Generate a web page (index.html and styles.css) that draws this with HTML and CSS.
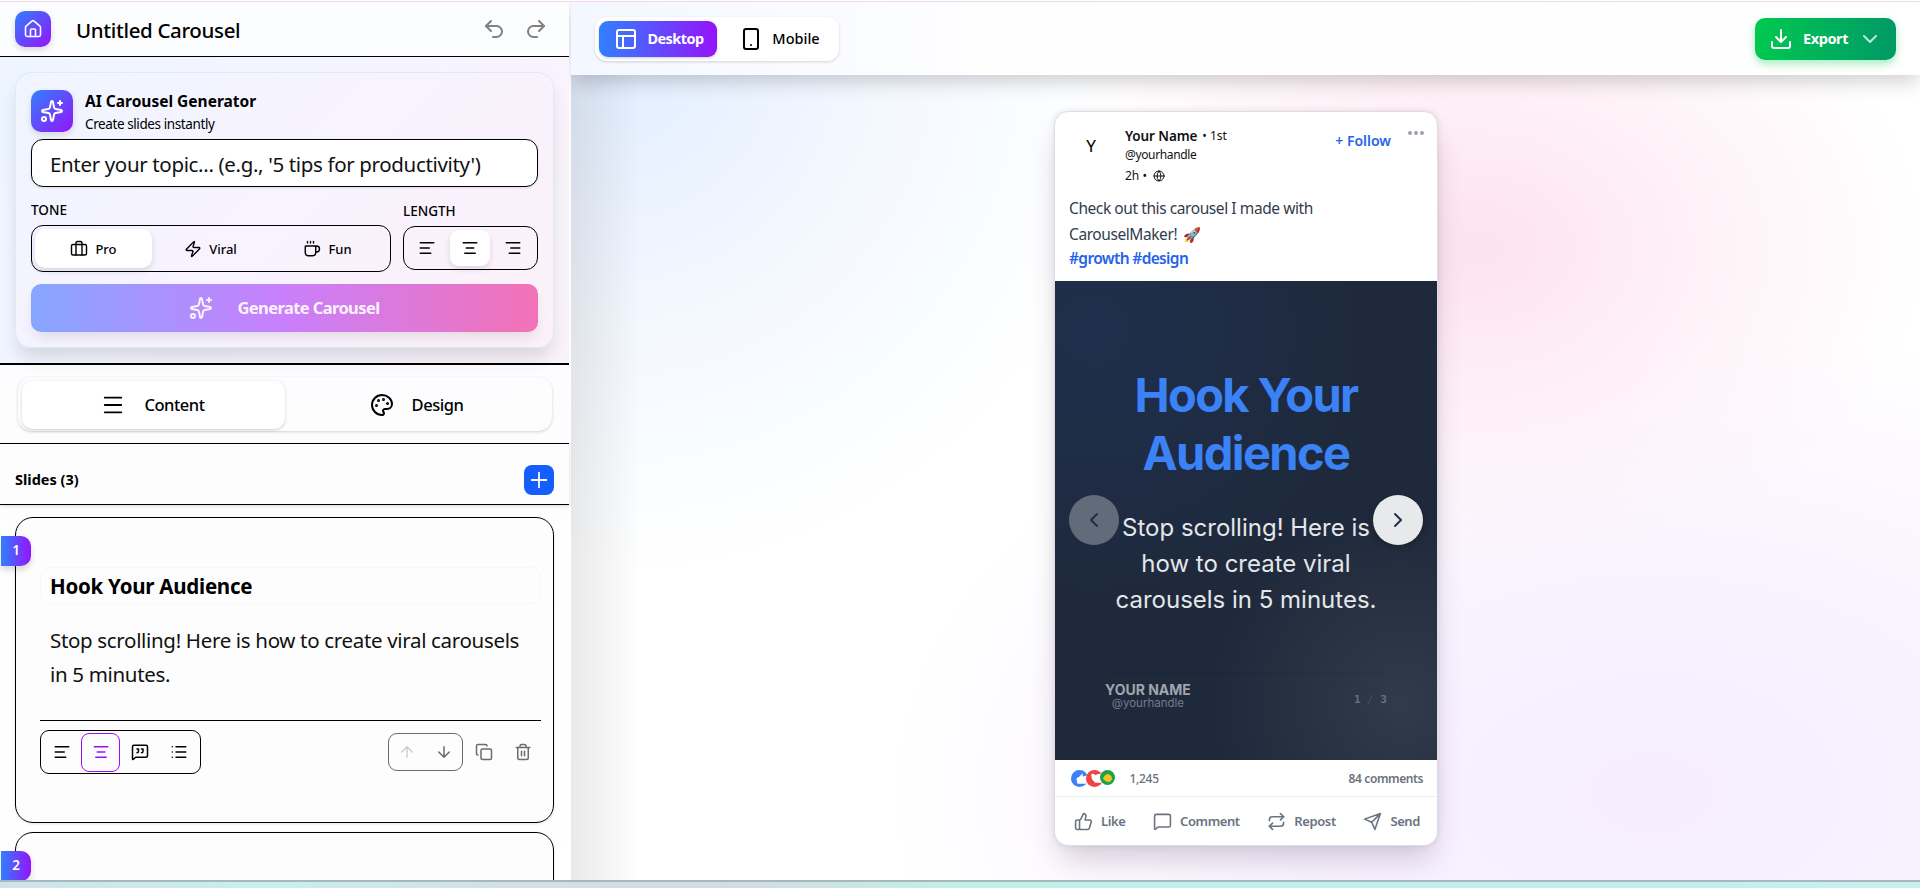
FILE: index.html
```
<!DOCTYPE html>
<html lang="en">
<head>
  <meta charset="UTF-8">
  <meta name="viewport" content="width=device-width, initial-scale=1.0">
  <title>Carousel Maker</title>
  <link rel="stylesheet" href="styles.css">
</head>
<body>
  <svg width="0" height="0" class="sprite">
    <symbol id="sparkles" viewBox="0 0 24 24">
      <path d="M11.017 2.814a1 1 0 0 1 1.966 0l1.051 5.558a2 2 0 0 0 1.594 1.594l5.558 1.051a1 1 0 0 1 0 1.966l-5.558 1.051a2 2 0 0 0-1.594 1.594l-1.051 5.558a1 1 0 0 1-1.966 0l-1.051-5.558a2 2 0 0 0-1.594-1.594l-5.558-1.051a1 1 0 0 1 0-1.966l5.558-1.051a2 2 0 0 0 1.594-1.594z"/>
      <path d="M20 2v4M22 4h-4"/><circle cx="4" cy="20" r="2"/>
    </symbol>
    <symbol id="align-left" viewBox="0 0 24 24"><path d="M3 5h18M3 12h12M3 19h14"/></symbol>
    <symbol id="align-center" viewBox="0 0 24 24"><path d="M3 5h18M7 12h10M5 19h14"/></symbol>
    <symbol id="align-right" viewBox="0 0 24 24"><path d="M3 5h18M9 12h12M7 19h14"/></symbol>
  </svg>

  <div class="app">
    <aside class="sidebar">
      <header class="side-header">
        <button class="home">
          <svg class="icon" viewBox="0 0 24 24"><path d="M15 21v-8a1 1 0 0 0-1-1h-4a1 1 0 0 0-1 1v8"/><path d="M3 10a2 2 0 0 1 .709-1.528l7-6a2 2 0 0 1 2.582 0l7 6A2 2 0 0 1 21 10v9a2 2 0 0 1-2 2H5a2 2 0 0 1-2-2z"/></svg>
        </button>
        <h1 class="project-name">Untitled Carousel</h1>
        <div class="history">
          <svg class="icon" viewBox="0 0 24 24"><path d="M9 14 4 9l5-5"/><path d="M4 9h10.500a5.500 5.500 0 0 1 0 11H11"/></svg>
          <svg class="icon" viewBox="0 0 24 24"><path d="m15 14 5-5-5-5"/><path d="M20 9H9.500a5.500 5.500 0 0 0 0 11H13"/></svg>
        </div>
      </header>

      <section class="generator">
        <div class="gen-card">
          <div class="gen-head">
            <div class="gen-icon"><svg class="icon"><use href="#sparkles"/></svg></div>
            <div>
              <h2 class="gen-title">AI Carousel Generator</h2>
              <p class="gen-sub">Create slides instantly</p>
            </div>
          </div>
          <div class="topic"><span>Enter your topic... (e.g., '5 tips for productivity')</span></div>
          <div class="options">
            <div class="tone">
              <span class="opt-label">TONE</span>
              <div class="tone-box">
                <button class="tone-btn active"><svg class="icon" viewBox="0 0 24 24"><path d="M16 20V4a2 2 0 0 0-2-2h-4a2 2 0 0 0-2 2v16"/><rect x="2" y="6" width="20" height="14" rx="2"/></svg><span>Pro</span></button>
                <button class="tone-btn"><svg class="icon" viewBox="0 0 24 24"><path d="M4 14a1 1 0 0 1-.780-1.630l9.900-10.200a.5.5 0 0 1 .860.460l-1.920 6.020A1 1 0 0 0 13 10h7a1 1 0 0 1 .780 1.630l-9.900 10.200a.5.5 0 0 1-.860-.460l1.920-6.020A1 1 0 0 0 11 14z"/></svg><span>Viral</span></button>
                <button class="tone-btn"><svg class="icon" viewBox="0 0 24 24"><path d="M10 2v2M14 2v2M6 2v2M16 8a1 1 0 0 1 1 1v8a4 4 0 0 1-4 4H7a4 4 0 0 1-4-4V9a1 1 0 0 1 1-1h14a4 4 0 1 1 0 8h-1"/></svg><span>Fun</span></button>
              </div>
            </div>
            <div class="length">
              <span class="opt-label">LENGTH</span>
              <div class="length-box">
                <button><svg class="icon"><use href="#align-left"/></svg></button>
                <button class="active"><svg class="icon"><use href="#align-center"/></svg></button>
                <button><svg class="icon"><use href="#align-right"/></svg></button>
              </div>
            </div>
          </div>
          <button class="generate"><svg class="icon"><use href="#sparkles"/></svg><span>Generate Carousel</span></button>
        </div>
      </section>

      <nav class="tabs-wrap">
        <div class="tabs">
          <button class="tab active"><svg class="icon" viewBox="0 0 24 24"><path d="M3 4h18M3 12h18M3 20h18"/></svg><span>Content</span></button>
          <button class="tab design"><svg class="icon" viewBox="0 0 24 24"><path d="M12 22a1 1 0 0 1 0-20 10 9 0 0 1 10 9 5 5 0 0 1-5 5h-2.250a1.750 1.750 0 0 0-1.400 2.800l.3.400a1.750 1.750 0 0 1-1.400 2.800z"/><g fill="currentColor"><circle cx="13.500" cy="6.500" r=".5"/><circle cx="17.500" cy="10.500" r=".5"/><circle cx="6.500" cy="12.500" r=".5"/><circle cx="8.500" cy="7.500" r=".5"/></g></svg><span>Design</span></button>
        </div>
      </nav>

      <div class="slides-head">
        <h3>Slides (3)</h3>
        <button class="add"><svg class="icon" viewBox="0 0 24 24"><path d="M4 12h16M12 4v16"/></svg></button>
      </div>

      <div class="slides">
        <article class="slide">
          <span class="num">1</span>
          <div class="slide-title">Hook Your Audience</div>
          <p class="slide-body"><span>Stop scrolling! Here is how to create viral carousels</span><br><span>in 5 minutes.</span></p>
          <div class="slide-tools">
            <div class="layouts">
              <button><svg class="icon"><use href="#align-left"/></svg></button>
              <button class="active"><svg class="icon"><use href="#align-center"/></svg></button>
              <button><svg class="icon" viewBox="0 0 24 24"><path d="M22 17a2 2 0 0 1-2 2H6.828a2 2 0 0 0-1.414.586l-2.202 2.202A.710.710 0 0 1 2 21.286V5a2 2 0 0 1 2-2h16a2 2 0 0 1 2 2z"/><path d="M14 13a2 2 0 0 0 2-2V8h-2M8 13a2 2 0 0 0 2-2V8H8"/></svg></button>
              <button><svg class="icon" viewBox="0 0 24 24"><path d="M8 5h13M8 12h13M8 19h13M3 5h.01M3 12h.01M3 19h.01"/></svg></button>
            </div>
            <div class="actions">
              <div class="move">
                <svg class="icon off" viewBox="0 0 24 24"><path d="m5 12 7-7 7 7M12 19V5"/></svg>
                <svg class="icon" viewBox="0 0 24 24"><path d="m19 12-7 7-7-7M12 5v14"/></svg>
              </div>
              <svg class="icon" viewBox="0 0 24 24"><rect x="8" y="8" width="14" height="14" rx="2"/><path d="M4 16c-1.100 0-2-.9-2-2V4c0-1.100.9-2 2-2h10c1.100 0 2 .9 2 2"/></svg>
              <svg class="icon" viewBox="0 0 24 24"><path d="M10 11v6M14 11v6M19 6v14a2 2 0 0 1-2 2H7a2 2 0 0 1-2-2V6M3 6h18M8 6V4a2 2 0 0 1 2-2h4a2 2 0 0 1 2 2v2"/></svg>
            </div>
          </div>
        </article>
        <article class="slide">
          <span class="num">2</span>
        </article>
      </div>
    </aside>

    <main class="stage">
      <header class="topbar">
        <div class="devices">
          <button class="device active"><svg class="icon" viewBox="0 0 24 24"><rect x="3" y="3" width="18" height="18" rx="2"/><path d="M3 9h18M9 21V9"/></svg><span>Desktop</span></button>
          <button class="device mobile"><svg class="icon" viewBox="0 0 24 24"><rect x="5" y="2" width="14" height="20" rx="2"/><path d="M12 18h.01"/></svg><span>Mobile</span></button>
        </div>
        <button class="export">
          <svg class="icon" viewBox="0 0 24 24"><path d="M21 15v4a2 2 0 0 1-2 2H5a2 2 0 0 1-2-2v-4M7 10l5 5 5-5M12 15V3"/></svg>
          <span>Export</span>
          <svg class="icon chevron" viewBox="0 0 24 24"><path d="m6 9 6 6 6-6"/></svg>
        </button>
      </header>

      <div class="canvas">
        <div class="post">
          <div class="post-head">
            <div class="avatar">Y</div>
            <div class="who">
              <div class="name"><b>Your Name</b><span>• 1st</span></div>
              <div class="handle">@yourhandle</div>
              <div class="time"><span>2h •</span><svg class="icon" viewBox="0 0 24 24"><circle cx="12" cy="12" r="10"/><path d="M12 2a14.500 14.500 0 0 0 0 20 14.500 14.500 0 0 0 0-20M2 12h20"/></svg></div>
            </div>
            <span class="follow">+ Follow</span>
            <span class="dots"><i></i><i></i><i></i></span>
          </div>
          <div class="caption">
            <p><span>Check out this carousel I made with</span><br><span>CarouselMaker! <em class="rocket">🚀</em></span></p>
            <p class="tags">#growth #design</p>
          </div>
          <div class="preview">
            <h2>Hook Your<br>Audience</h2>
            <p class="preview-body">Stop scrolling! Here is<br>how to create viral<br>carousels in 5 minutes.</p>
            <footer class="preview-foot">
              <div class="sign"><b>YOUR NAME</b><span>@yourhandle</span></div>
              <div class="page">1 <i>/</i> 3</div>
            </footer>
            <button class="nav prev"><svg class="icon" viewBox="0 0 24 24"><path d="m15 18-6-6 6-6"/></svg></button>
            <button class="nav next"><svg class="icon" viewBox="0 0 24 24"><path d="m9 18 6-6-6-6"/></svg></button>
          </div>
          <div class="stats">
            <div class="reactions">
              <span class="react like"><svg viewBox="0 0 16 16"><path d="M5 8 8 6l3-3v3l5-1v8H6z"/></svg></span>
              <span class="react love"><svg viewBox="0 0 16 16"><path d="M5 4c2-1 3 0 4 1 1-1 4-2 7-1v8H9C6 10 5 8 5 4z"/></svg></span>
              <span class="react clap"><svg viewBox="0 0 16 16"><path d="M5 6 8 4l4 2 1 4-3 3-4-1-3-3z"/></svg></span>
            </div>
            <span class="count">1,245</span>
            <span class="comments">84 comments</span>
          </div>
          <div class="post-actions">
            <div class="act"><svg class="icon" viewBox="0 0 24 24"><path d="M7 10v12M15 5.880 14 10h5.830a2 2 0 0 1 1.920 2.560l-2.330 8A2 2 0 0 1 17.500 22H4a2 2 0 0 1-2-2v-8a2 2 0 0 1 2-2h2.760a2 2 0 0 0 1.790-1.110L12 2a3.130 3.130 0 0 1 3 3.880z"/></svg><span>Like</span></div>
            <div class="act"><svg class="icon" viewBox="0 0 24 24"><path d="M22 17a2 2 0 0 1-2 2H6.828a2 2 0 0 0-1.414.586l-2.202 2.202A.710.710 0 0 1 2 21.286V5a2 2 0 0 1 2-2h16a2 2 0 0 1 2 2z"/></svg><span>Comment</span></div>
            <div class="act"><svg class="icon" viewBox="0 0 24 24"><path d="m17 2 4 4-4 4"/><path d="M3 11v-1a4 4 0 0 1 4-4h14M7 22l-4-4 4-4"/><path d="M21 13v1a4 4 0 0 1-4 4H3"/></svg><span>Repost</span></div>
            <div class="act"><svg class="icon" viewBox="0 0 24 24"><path d="M22 2 15 22l-4-9-9-4zM22 2 11 13"/></svg><span>Send</span></div>
          </div>
        </div>
      </div>
    </main>
  </div>
  <div class="desk-edge"></div>
</body>
</html>
```

FILE: styles.css
```
* {
  box-sizing: border-box;
  margin: 0;
  padding: 0;
}
body {
  height: 888px;
  overflow: hidden;
  display: flex;
  flex-direction: column;
  font-family: "Noto Sans", "Open Sans", sans-serif;
  color: #000;
  background: #fff;
  border-top: 1px solid #fff;
}
.app {
  display: flex;
  height: 879px;
  border-top: 1px solid #f0dcec;
}
.desk-edge {
  height: 8px;
  border-top: 2px solid #a5b8bc;
  background: linear-gradient(90deg, #cfe3ea 0, #c9efec 14%, #d4dfe8 27%, #d4dbe4 38%, #c3f0e4 50%, #c2efee 60%, #c6efee 100%);
}
.sprite {
  position: absolute;
}
button {
  font: inherit;
  color: inherit;
  border: none;
  background: none;
  display: flex;
  align-items: center;
  justify-content: center;
}
span {
  white-space: nowrap;
}
.icon {
  width: 18px;
  height: 18px;
  flex: none;
  fill: none;
  stroke: currentColor;
  stroke-width: 2;
  stroke-linecap: round;
  stroke-linejoin: round;
}

/* sidebar */
.sidebar {
  width: 569px;
  flex: none;
  display: flex;
  flex-direction: column;
  background: linear-gradient(180deg, #fbfbfe, #fff);
  position: relative;
}
.side-header {
  height: 55px;
  flex: none;
  display: flex;
  align-items: center;
  padding: 0 21px 0 15px;
  border-bottom: 1px solid #000;
  box-shadow: 0 1px 3px rgba(100, 50, 100, 0.2);
  background: #fcfdfe;
}
.home {
  width: 36px;
  height: 36px;
  border-radius: 10px;
  color: #fff;
  background: linear-gradient(135deg, #3080ff, #9514fa);
  box-shadow: 0 3px 6px rgba(0, 0, 0, 0.15);
}
.home .icon {
  width: 20px;
  height: 20px;
  stroke-width: 1.9;
}
.project-name {
  margin-left: 25px;
  font-size: 20.5px;
  font-weight: 500;
  letter-spacing: -0.35px;
  padding-top: 2px;
}
.history {
  margin-left: auto;
  display: flex;
  gap: 18px;
  color: #808080;
}
.history .icon {
  width: 24px;
  height: 24px;
}
.generator {
  height: 308px;
  flex: none;
  padding: 15px 15px 0;
  border-bottom: 2px solid #000;
  background: linear-gradient(120deg, #eef5ff, #f6f4fe 60%, #fbf3fa);
}
.gen-card {
  height: 276px;
  width: 539px;
  border: 1px solid #dbeafe;
  border-radius: 16px;
  padding: 17px 15px;
  background: linear-gradient(135deg, #eff5ff, #f8f3ff 50%, #fcf1f8);
  box-shadow: 0 12px 18px -3px rgba(0, 0, 0, 0.13);
}
.gen-head {
  display: flex;
  gap: 12px;
  height: 42px;
}
.gen-icon {
  width: 42px;
  height: 42px;
  border-radius: 10px;
  display: flex;
  align-items: center;
  justify-content: center;
  color: #fff;
  background: linear-gradient(135deg, #3080ff, #9514fa);
  box-shadow: 0 3px 6px rgba(0, 0, 0, 0.12);
}
.gen-icon .icon, .generate .icon {
  width: 24px;
  height: 24px;
}
.gen-title {
  font-size: 15.5px;
  line-height: 23px;
}
.gen-sub {
  font-size: 13.5px;
  line-height: 23px;
  letter-spacing: -0.4px;
}
.topic {
  margin-top: 7px;
  height: 48px;
  border: 1px solid #000;
  border-radius: 12px;
  padding: 1px 18px 0;
  display: flex;
  align-items: center;
  font-size: 20.5px;
  letter-spacing: -0.35px;
  color: #111;
  background: #fff;
  box-shadow: 0 1px 3px rgba(0, 0, 0, 0.1);
}
.options {
  display: flex;
  gap: 12px;
  margin-top: 14px;
}
.opt-label {
  display: block;
  height: 20px;
  line-height: 19px;
  font-size: 13.5px;
  font-weight: 500;
}
.tone-box {
  width: 360px;
  height: 47px;
  margin-top: 4px;
  border: 1px solid #000;
  border-radius: 12px;
  padding: 3px;
  display: flex;
}
.tone-btn {
  width: 117px;
  height: 39px;
  gap: 7px;
  border-radius: 10px;
  font-size: 13px;
  font-weight: 500;
}
.tone-btn .icon {
  stroke-width: 1.9;
}
.tone-btn.active, .length-box .active {
  background: #fff;
  box-shadow: 0 3px 6px rgba(0, 0, 0, 0.12);
}
.length .opt-label {
  padding-top: 1px;
}
.length-box {
  width: 135px;
  height: 44px;
  margin-top: 5px;
  border: 1px solid #000;
  border-radius: 12px;
  padding: 3px;
  display: flex;
  gap: 3px;
}
.length-box button {
  width: 40px;
  height: 36px;
  border-radius: 9px;
}
.generate {
  width: 507px;
  height: 48px;
  margin-top: 12px;
  border-radius: 10px;
  gap: 24px;
  color: #faf3ff;
  font-size: 16.5px;
  font-weight: 700;
  letter-spacing: -0.6px;
  background: linear-gradient(90deg, #87a6ff, #c97ffb 50%, #f272b6);
  box-shadow: 0 8px 14px -3px rgba(0, 0, 0, 0.1);
}
.generate span {
  margin-top: -2px;
}
.tabs-wrap {
  height: 79px;
  flex: none;
  padding: 12px 17px 0 18px;
  border-bottom: 1px solid #000;
}
.tabs {
  height: 54px;
  display: flex;
  padding: 4px;
  border-radius: 14px;
  box-shadow: 0 1px 3px rgba(0, 0, 0, 0.18);
}
.tab {
  flex: 1;
  height: 48px;
  gap: 20px;
  border-radius: 11px;
  font-size: 16.5px;
  font-weight: 500;
  letter-spacing: -0.45px;
}
.tab span {
  margin-top: -2px;
}
.tab.active {
  background: #fff;
  box-shadow: 0 1px 3px rgba(0, 0, 0, 0.2);
}
.tab .icon {
  width: 22px;
  height: 22px;
}
.tab.design {
  gap: 18px;
}
.tab.design .icon {
  width: 24px;
  height: 24px;
}
.slides-head {
  height: 61px;
  flex: none;
  display: flex;
  align-items: center;
  justify-content: space-between;
  padding: 12px 15px 0;
  border-bottom: 1px solid #000;
  box-shadow: 0 1px 4px rgba(0, 0, 0, 0.15);
}
.slides-head h3 {
  font-size: 14.5px;
  margin-top: -2px;
}
.add {
  width: 30px;
  height: 30px;
  border-radius: 8px;
  background: #155dfc;
  color: #fff;
}
.add .icon {
  width: 22px;
  height: 22px;
}
.slides {
  flex: 1;
  overflow: hidden;
  padding: 12px 15px 0;
  display: flex;
  flex-direction: column;
  gap: 9px;
}
.slide {
  position: relative;
  flex: none;
  width: 539px;
  height: 306px;
  border: 1px solid #000;
  border-radius: 18px;
  padding: 49px 12px 0 24px;
  background: #fdfdfe;
  box-shadow: 0 1px 3px rgba(0, 0, 0, 0.1);
}
.num {
  position: absolute;
  left: -15px;
  top: 18px;
  width: 30px;
  height: 30px;
  line-height: 28px;
  text-align: center;
  font-size: 13.5px;
  font-weight: 600;
  color: #fff;
  border-radius: 0 10px 10px 0;
  background: linear-gradient(90deg, #3080ff, #9514fa);
  box-shadow: 0 4px 6px rgba(0, 0, 0, 0.15);
}
.slide-title {
  height: 37px;
  line-height: 37px;
  padding-left: 9px;
  border: 1px solid #f7f7f7;
  border-radius: 10px;
  font-size: 20.5px;
  font-weight: 700;
  letter-spacing: -0.25px;
}
.slide-body {
  margin: 19px 0 0 10px;
  font-size: 20.5px;
  line-height: 34px;
  letter-spacing: -0.33px;
  color: #111;
}
.slide-tools {
  margin-top: 29px;
  padding-top: 9px;
  border-top: 1px solid #000;
  display: flex;
  justify-content: space-between;
  align-items: center;
}
.layouts {
  width: 161px;
  height: 44px;
  border: 1px solid #000;
  border-radius: 9px;
  display: flex;
  align-items: center;
  padding-left: 1px;
}
.layouts button {
  width: 39px;
  height: 39px;
  border-radius: 8px;
}
.layouts .active {
  color: #9810fa;
  border: 1.5px solid #9810fa;
}
.actions {
  display: flex;
  align-items: center;
  gap: 21px;
  color: #6b6b6b;
  padding-right: 9px;
}
.move {
  width: 75px;
  height: 38px;
  border: 1px solid #6b6b6b;
  border-radius: 9px;
  display: flex;
  align-items: center;
  justify-content: space-around;
  margin-right: -9px;
}
.off {
  opacity: 0.3;
}

/* preview stage */
.stage {
  flex: 1;
  min-width: 0;
  margin-left: 2px;
  display: flex;
  flex-direction: column;
  background:
    linear-gradient(90deg, rgba(60, 60, 60, 0.11), transparent 70px),
    radial-gradient(ellipse 520px 520px at 3% 6%, #e2edff 0, rgba(240, 246, 255, 0.8) 50%, transparent 100%),
    radial-gradient(ellipse 450px 330px at 67% 28%, #fde2ef 0, rgba(254, 240, 246, 0.7) 60%, transparent 100%),
    radial-gradient(ellipse 760px 470px at 80% 90%, #f6eeff 0, rgba(248, 242, 255, 0.9) 50%, transparent 100%),
    #fff;
}
.topbar {
  height: 73px;
  flex: none;
  display: flex;
  align-items: center;
  justify-content: space-between;
  padding: 0 24px;
  background: linear-gradient(90deg, #f3f7ff, #fefeff 30%, #fff);
  box-shadow: 0 9px 18px -2px rgba(0, 0, 0, 0.18);
}
.topbar span {
  margin-top: -2px;
}
.devices {
  width: 244px;
  height: 44px;
  border-radius: 12px;
  padding: 4px;
  display: flex;
  background: #fff;
  box-shadow: 0 1px 3px rgba(0, 0, 0, 0.16);
}
.device {
  width: 119px;
  height: 36px;
  gap: 9px;
  border-radius: 9px;
  font-size: 14.5px;
  font-weight: 500;
}
.device.active {
  color: #fff;
  font-weight: 700;
  letter-spacing: -0.55px;
  padding-left: 2px;
  background: linear-gradient(90deg, #3080ff, #9514fa);
  box-shadow: 0 1px 3px rgba(0, 0, 0, 0.2);
}
.device.mobile {
  padding-left: 7px;
}
.device .icon, .export .icon {
  width: 24px;
  height: 24px;
}
.export {
  width: 141px;
  height: 42px;
  gap: 10px;
  border-radius: 10px;
  color: #fff;
  font-size: 14.5px;
  font-weight: 700;
  letter-spacing: -0.4px;
  background: linear-gradient(90deg, #00c950, #009966);
  box-shadow: 0 4px 8px rgba(0, 201, 80, 0.35);
}
.chevron {
  opacity: 0.75;
}
.canvas {
  flex: 1;
  padding-left: 483px;
  padding-top: 36px;
}
.post {
  width: 384px;
  height: 735px;
  border: 1px solid #dcdee4;
  border-radius: 14px;
  background: #fff;
  box-shadow: 0 18px 30px -6px rgba(60, 20, 60, 0.2), 0 0 6px rgba(60, 20, 60, 0.1);
}
.post-head {
  height: 80px;
  display: flex;
  padding: 15px 13px 0 15px;
}
.avatar {
  width: 42px;
  height: 42px;
  line-height: 38px;
  text-align: center;
  font-size: 17px;
}
.who {
  margin-left: 13px;
  font-size: 12px;
  color: #111;
}
.name {
  display: flex;
  gap: 5px;
  line-height: 18px;
}
.name b {
  font-size: 13.5px;
  font-weight: 600;
  letter-spacing: -0.1px;
}
.handle {
  line-height: 20px;
  letter-spacing: -0.35px;
}
.time {
  display: flex;
  align-items: center;
  gap: 6px;
  line-height: 21px;
}
.time .icon {
  width: 12px;
  height: 12px;
}
.follow {
  margin-left: auto;
  padding-top: 2px;
  line-height: 24px;
  color: #2563eb;
  font-size: 14px;
  font-weight: 600;
}
.dots {
  display: flex;
  gap: 2px;
  margin: 4px 0 0 17px;
}
.dots i {
  width: 4px;
  height: 4px;
  border-radius: 50%;
  background: #9ca3af;
}
.caption {
  height: 89px;
  padding: 3px 14px 0;
  font-size: 15.5px;
  line-height: 26px;
  letter-spacing: -0.42px;
  color: #333d4d;
}
.rocket {
  font-style: normal;
  font-size: 14.5px;
  margin-left: 2px;
}
.tags {
  line-height: 23px;
  color: #2563eb;
  font-weight: 600;
  letter-spacing: -0.65px;
}
.preview {
  position: relative;
  height: 479px;
  padding-top: 85px;
  text-align: center;
  font-family: Inter, sans-serif;
  background:
    radial-gradient(circle 190px at 91% 88%, rgba(120, 120, 130, 0.22), transparent),
    radial-gradient(circle 280px at 10% 10%, rgba(37, 99, 235, 0.1), transparent),
    #1e293b;
}
.preview h2 {
  font-size: 47px;
  line-height: 58px;
  font-weight: 700;
  letter-spacing: -1.6px;
  color: #3b82f6;
}
.preview-body {
  margin-top: 28px;
  font-size: 24px;
  line-height: 36px;
  color: #e4e6e9;
}
.preview-foot {
  display: flex;
  justify-content: space-between;
  align-items: center;
  margin: 55px 50px 0;
  padding-bottom: 7px;
  height: 52px;
  border-top: 1px solid rgba(0, 0, 0, 0.08);
}
.sign {
  display: flex;
  flex-direction: column;
  align-items: center;
  font-size: 11.5px;
  line-height: 12px;
  color: #747c89;
}
.sign b {
  font-size: 14px;
  line-height: 14px;
  color: #a0a5ad;
}
.page {
  padding-top: 6px;
  font-family: "DejaVu Sans Mono", monospace;
  font-size: 11px;
  font-weight: 700;
  color: #6a707b;
}
.page i {
  font-weight: 400;
  color: #474f5d;
}
.nav {
  position: absolute;
  top: 214px;
  width: 50px;
  height: 50px;
  border-radius: 50%;
  color: #1e3048;
  background: #e8e9eb;
  box-shadow: 0 3px 6px rgba(0, 0, 0, 0.2);
}
.nav .icon {
  width: 24px;
  height: 24px;
}
.prev {
  left: 14px;
  background: #626b79;
  box-shadow: none;
}
.next {
  right: 14px;
}
.stats {
  height: 37px;
  display: flex;
  align-items: center;
  padding: 0 14px 0 16px;
  border-bottom: 1px solid #eceef1;
  color: #6b7280;
  font-size: 12px;
  font-weight: 500;
  letter-spacing: -0.3px;
}
.reactions {
  display: flex;
}
.react {
  width: 17px;
  height: 17px;
  border-radius: 50%;
  margin-right: -2.5px;
  overflow: hidden;
}
.react svg {
  display: block;
  fill: #fff;
}
.like {
  background: #3b82f6;
}
.love {
  background: #ef4444;
}
.clap {
  width: 15px;
  height: 15px;
  background: #16a34a;
}
.clap svg {
  fill: #fbbf24;
}
.count {
  margin-left: 17px;
}
.comments {
  margin-left: auto;
  font-weight: 600;
  letter-spacing: -0.4px;
}
.post-actions {
  display: flex;
  justify-content: space-between;
  align-items: center;
  height: 49px;
  padding: 0 17px 0 19px;
  color: #6b7280;
  font-size: 13px;
  font-weight: 600;
  letter-spacing: -0.4px;
}
.act {
  display: flex;
  align-items: center;
  gap: 8px;
}
.act .icon {
  width: 19px;
  height: 19px;
}
.act span {
  margin-top: -1px;
}
```
